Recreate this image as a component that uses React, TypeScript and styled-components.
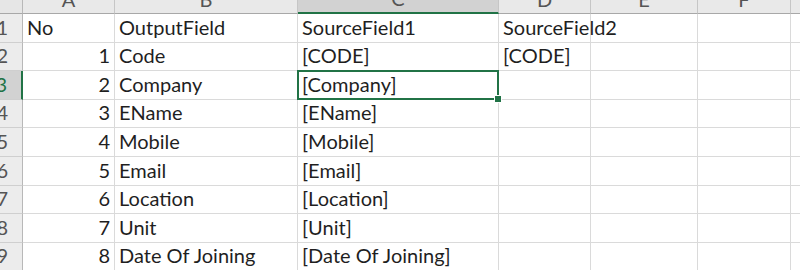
import React from "react";
import styled, { createGlobalStyle, css } from "styled-components";

const GlobalStyle = createGlobalStyle`
  html, body { margin: 0; padding: 0; background: #ffffff; overflow: hidden; }
  #root { width: 800px; height: 270px; overflow: hidden; }
`;

const FONT = `Lato, "Open Sans", "Liberation Sans", sans-serif`;
const GREEN = "#217346";
const GRID = "#dadada";

const Sheet = styled.div`
  display: grid;
  grid-template-columns: 23px 92px 183px 201px 92px 107px 93px 100px;
  grid-template-rows: 14px repeat(9, 28.6px);
  font-family: ${FONT};
  font-size: 20px;
  color: #1f1f1f;
  width: 891px;
`;

const Corner = styled.div`
  background: #e6e6e6;
  border-right: 1px solid #b8b8b8;
  border-bottom: 1px solid #a8a8a8;
  box-sizing: border-box;
`;

const ColHeader = styled.div<{ $active?: boolean }>`
  box-sizing: border-box;
  display: flex;
  align-items: flex-end;
  justify-content: center;
  overflow: hidden;
  line-height: 19px;
  padding-bottom: 4px;
  color: #555;
  background: ${(p) => (p.$active ? "#d2d2d2" : "#e9e9e9")};
  border-right: 1px solid #c6c6c6;
  border-bottom: ${(p) => (p.$active ? `2px solid ${GREEN}` : "1px solid #a8a8a8")};
`;

const RowHeader = styled.div<{ $active?: boolean }>`
  box-sizing: border-box;
  display: flex;
  align-items: flex-end;
  justify-content: flex-end;
  overflow: hidden;
  line-height: 19px;
  padding-right: 14px;
  padding-bottom: 5px;
  color: ${(p) => (p.$active ? GREEN : "#555")};
  background: ${(p) => (p.$active ? "#d2d2d2" : "#ececec")};
  border-right: ${(p) => (p.$active ? `2px solid ${GREEN}` : "1px solid #b8b8b8")};
  border-bottom: 1px solid #cfcfcf;
`;

const Cell = styled.div<{ $num?: boolean; $selected?: boolean }>`
  box-sizing: border-box;
  position: relative;
  display: flex;
  align-items: flex-end;
  justify-content: ${(p) => (p.$num ? "flex-end" : "flex-start")};
  white-space: nowrap;
  line-height: 19px;
  padding: 0 4px 5px 4px;
  border-right: 1px solid ${GRID};
  border-bottom: 1px solid ${GRID};
  ${(p) =>
    p.$selected &&
    css`
      z-index: 2;
      &::after {
        content: "";
        position: absolute;
        left: -1px;
        top: -1px;
        right: -1px;
        bottom: -1px;
        border: 2px solid ${GREEN};
        pointer-events: none;
      }
    `}
`;

const FillHandle = styled.span`
  position: absolute;
  right: -4px;
  bottom: -4px;
  width: 6px;
  height: 6px;
  background: ${GREEN};
  border: 1px solid #ffffff;
  z-index: 3;
`;

const columns = ["A", "B", "C", "D", "E", "F", "G"];

const rows: (string | number)[][] = [
  ["No", "OutputField", "SourceField1", "SourceField2", "", "", ""],
  [1, "Code", "[CODE]", "[CODE]", "", "", ""],
  [2, "Company", "[Company]", "", "", "", ""],
  [3, "EName", "[EName]", "", "", "", ""],
  [4, "Mobile", "[Mobile]", "", "", "", ""],
  [5, "Email", "[Email]", "", "", "", ""],
  [6, "Location", "[Location]", "", "", "", ""],
  [7, "Unit", "[Unit]", "", "", "", ""],
  [8, "Date Of Joining", "[Date Of Joining]", "", "", "", ""],
];

const SEL_ROW = 2;
const SEL_COL = 2;

export default function App() {
  return (
    <>
      <GlobalStyle />
      <Sheet>
        <Corner />
        {columns.map((c, i) => (
          <ColHeader key={c} $active={i === SEL_COL}>
            {c}
          </ColHeader>
        ))}
        {rows.map((r, ri) => (
          <React.Fragment key={ri}>
            <RowHeader $active={ri === SEL_ROW}>{ri + 1}</RowHeader>
            {r.map((v, ci) => {
              const selected = ri === SEL_ROW && ci === SEL_COL;
              return (
                <Cell key={ci} $num={typeof v === "number"} $selected={selected}>
                  {v}
                  {selected && <FillHandle />}
                </Cell>
              );
            })}
          </React.Fragment>
        ))}
      </Sheet>
    </>
  );
}
